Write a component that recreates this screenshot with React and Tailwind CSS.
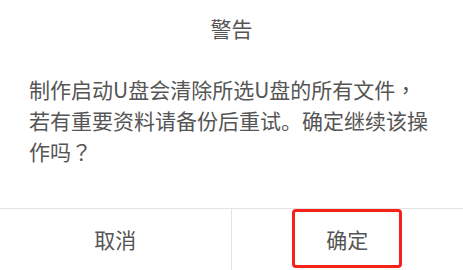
export default function App() {
  const punct = { fontFamily: '"Noto Sans CJK TC", "Noto Sans CJK SC", sans-serif' };
  return (
    <div
      className="w-[463px] h-[270px] bg-white flex flex-col overflow-hidden"
      style={{ fontFamily: '"Noto Sans CJK SC", "Noto Sans", sans-serif' }}
    >
      <div className="pt-[14px] h-[43px] text-center text-[21px] leading-[28px] text-[#555555]">警告</div>
      <p className="mt-[31px] pl-[29px] pr-[32px] text-[21px] leading-[31px] text-[#555555]">
        制作启动U盘会清除所选U盘的所有文件<span style={punct}>，</span>若有重要资料请备份后重试。确定继续该操作吗<span style={punct}>？</span>
      </p>
      <div className="mt-auto h-[62px] border-t border-[#e3e3e3] grid grid-cols-2">
        <div className="flex items-center justify-center text-[21px] text-[#555555] border-r border-[#e3e3e3]">取消</div>
        <div className="relative flex items-center justify-center text-[21px] text-[#555555]">
          确定
          <div className="absolute top-0 left-1/2 -translate-x-1/2 w-[110px] h-[59px] border-[3px] border-[#f5221b] rounded-[4px]"></div>
        </div>
      </div>
    </div>
  );
}
